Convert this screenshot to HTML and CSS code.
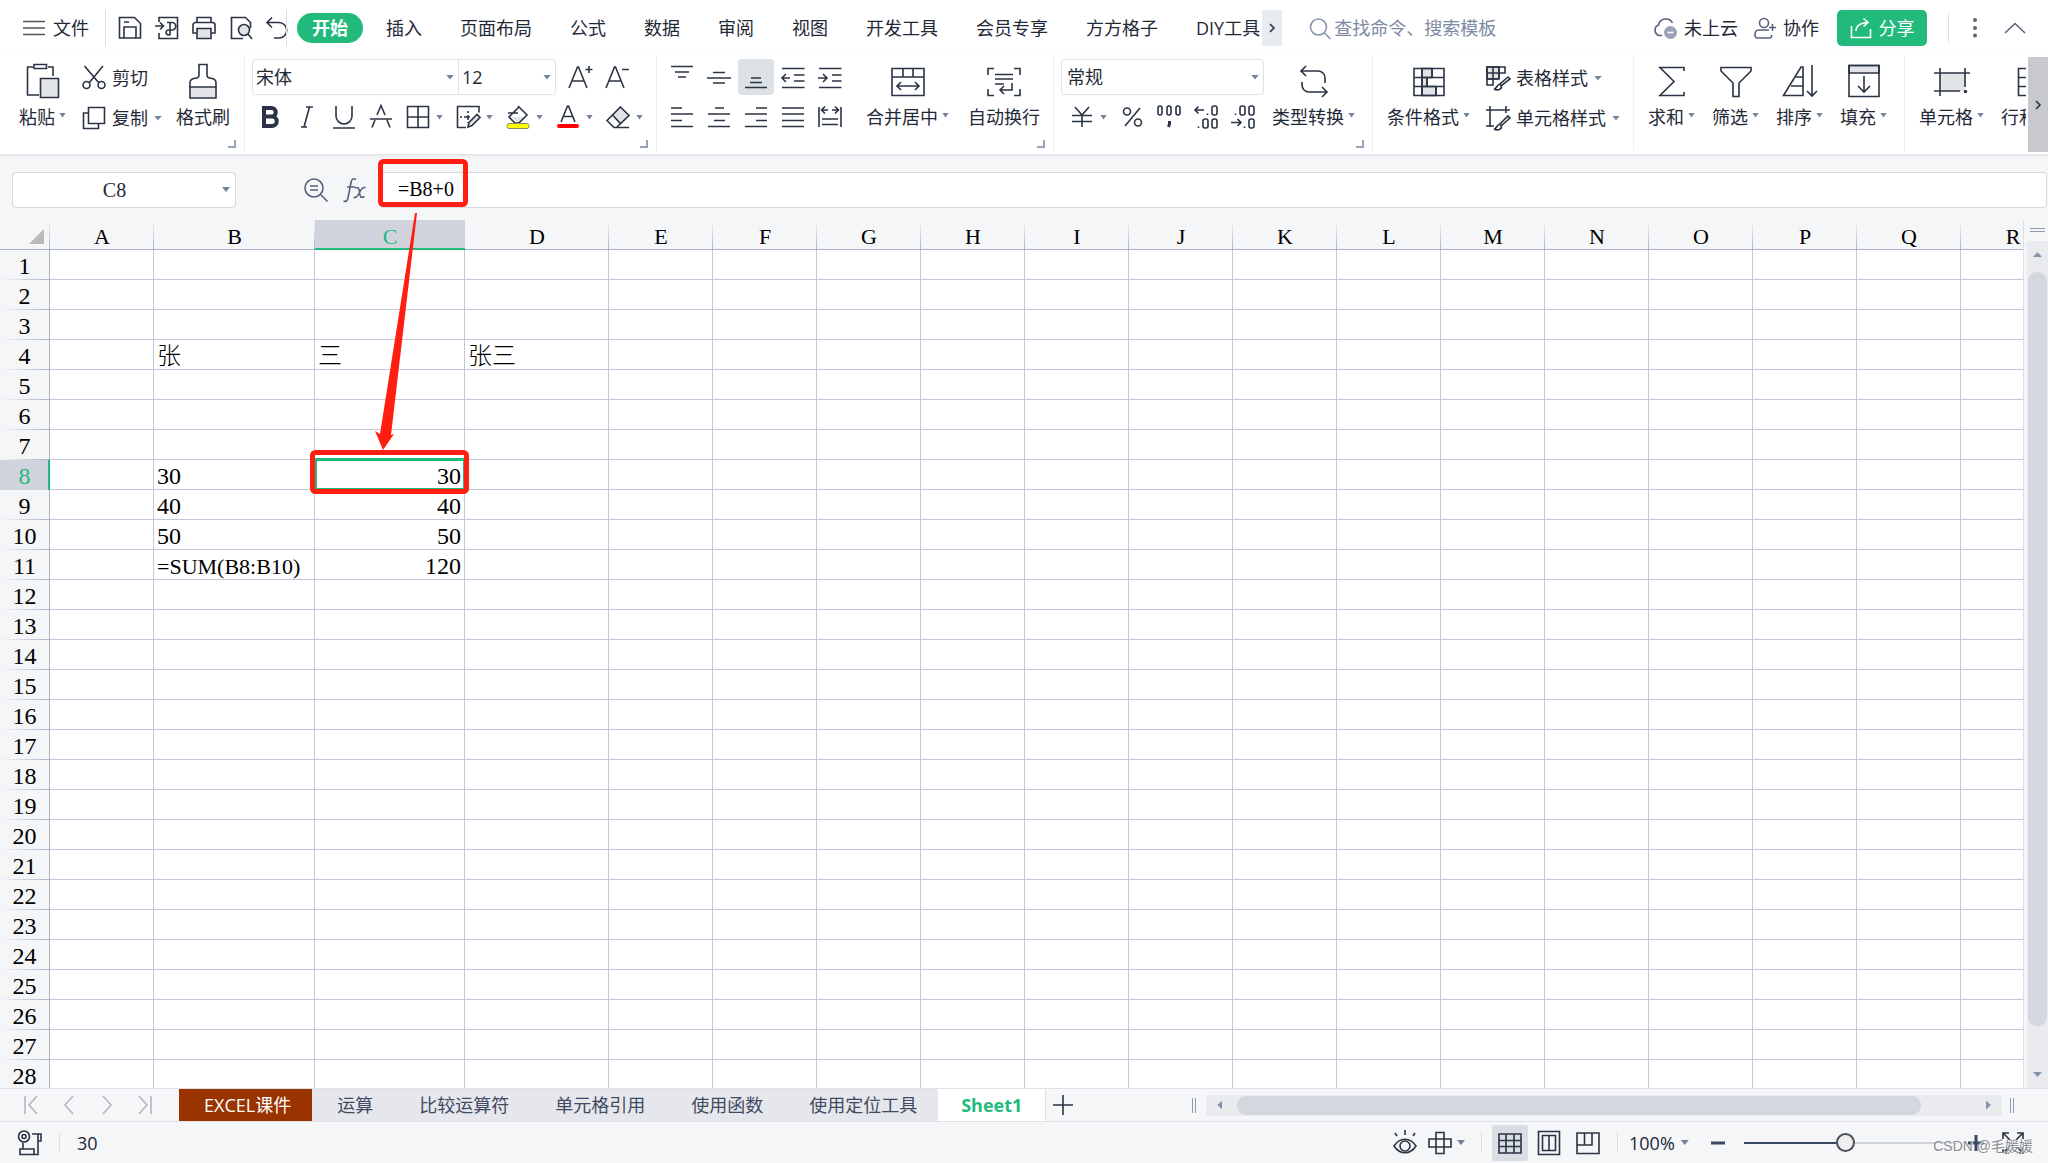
FILE: index.html
```html
<!DOCTYPE html>
<html lang="zh-CN">
<head>
<meta charset="utf-8">
<title>Sheet1</title>
<link rel="stylesheet" href="styles.css">
</head>
<body>
<header class="menubar">
  <button class="file"><svg class="ic" width="22" height="16"><path d="M0 1.500h22M0 8h22M0 14.500h22"/></svg>文件</button>
  <span class="sep tall"></span>
  <div class="quick">
    <button aria-label="保存"><svg class="ic" width="24" height="24"><path d="M1.500 1.500h15l6 6v14.500h-21zM6 22v-11h12v11M6 6h5"/></svg></button>
    <button aria-label="输出为PDF"><svg class="ic" width="24" height="24"><path d="M4 6v-4.500h18.500v21H4V17M0 10h8M5 6.500l3.500 3.500-3.500 3.500M12 6.500h5a3 3 0 0 1 0 7.500h-3a2.500 2.500 0 1 0 1 4.500V7"/></svg></button>
    <button aria-label="打印"><svg class="ic" width="24" height="24"><path d="M5 6V1.500h14V6M5 17H1V9a2.500 2.500 0 0 1 2.500-2.500h17A2.500 2.500 0 0 1 23 9v8h-4"/><path class="tint" d="M5 12.500h14v10H5z"/></svg></button>
    <button aria-label="打印预览"><svg class="ic" width="24" height="24"><path d="M14 22.500H2.500v-21h14l5 5V12"/><circle class="tint" cx="15" cy="14" r="5.500"/><path d="M19 18l4 5"/></svg></button>
    <button aria-label="撤消"><svg class="ic" width="24" height="24"><path d="M6 1.500L1 6.500l5 5M1.500 6.500H13a7.500 7.500 0 0 1 0 15.500H8"/></svg></button>
  </div>
  <span class="sep tall undo-sep"></span>
  <nav class="tabs">
    <button class="on">开始</button><button>插入</button><button>页面布局</button><button>公式</button><button>数据</button><button>审阅</button><button>视图</button><button>开发工具</button><button>会员专享</button><button>方方格子</button><button class="last">DIY工具</button>
  </nav>
  <button class="more" aria-label="更多"><svg class="ic" width="8" height="10"><path d="M2 1l4 4-4 4"/></svg></button>
  <label class="search"><svg class="ic" width="23" height="23"><circle cx="9.500" cy="10" r="8"/><path d="M15.500 16l6 6"/></svg><input type="text" placeholder="查找命令、搜索模板" aria-label="查找命令"></label>
  <div class="account">
    <button class="cloud"><svg class="ic soft" width="25" height="24"><path d="M9 19.500H6.500a5.500 5.500 0 0 1-1-10.500 7.500 7.500 0 0 1 14-2"/><circle cx="17.500" cy="16.500" r="6.500" class="dot"/><path d="M14.500 16.500h6" class="wh"/></svg>未上云</button>
    <button class="coop"><svg class="ic soft" width="23" height="24"><circle cx="10" cy="7" r="4.500"/><path d="M15 14H5a4 4 0 0 0-4 4v1.500A2.500 2.500 0 0 0 3.500 22h12a2 2 0 0 0 2-2v-1M18.500 8v7M15 11.500h7"/></svg>协作</button>
    <button class="share"><svg class="ic" width="22" height="22"><path d="M1.500 9v11.500h19V12M6 14c0-5 4-8 11.500-8.500M13.500 1.500l4.500 4-4.500 4"/></svg>分享</button>
    <span class="sep"></span>
    <button class="dots" aria-label="选项"><svg width="4" height="20"><g fill="#5b6577"><circle cx="2" cy="2" r="2"/><circle cx="2" cy="10" r="2"/><circle cx="2" cy="17.500" r="2"/></g></svg></button>
    <button aria-label="收起功能区"><svg class="ic gray" width="22" height="12"><path d="M1 11L11 1.500 21 11"/></svg></button>
  </div>
</header>

<section class="ribbon" aria-label="开始">
  <div class="groups">
    <div class="group g-clip">
      <button class="big"><svg class="ic" width="36" height="36"><path d="M8 4H2.500v28H14M23 4h5v9"/><path d="M9 1.500h12.500v4H9z"/><path class="tint" d="M15.500 15.500h18v19h-18z"/></svg><span>粘贴<i class="caret"></i></span></button>
      <div class="stack">
        <button><svg class="ic" width="24" height="24"><path d="M2.500 0l14.500 17M21 0L7 17"/><circle cx="4.500" cy="19" r="3.500"/><circle cx="19.500" cy="19" r="3.500"/></svg>剪切</button>
        <button><svg class="ic" width="24" height="24"><path d="M6.500 1.500h16v16h-16zM6 7H1.500v15.500h15V18"/></svg>复制<i class="caret"></i></button>
      </div>
      <button class="big"><svg class="ic" width="36" height="36"><path class="tint" d="M5 24h26v11H5z"/><path d="M5 24v-4c0-3 1-4 4-4.500 4-.500 5-1 5-4V1.500h8v10c0 3 1 3.500 5 4 3 .500 4 1.500 4 4.500v4"/></svg><span>格式刷</span></button>
      <i class="launcher"></i>
    </div>
    <div class="group g-font">
      <div class="rows">
        <div class="row">
          <div class="combo pair">
            <span class="sel fam"><select aria-label="字体"><option>宋体</option></select><i class="caret"></i></span>
            <span class="sel size"><select aria-label="字号"><option>12</option></select><i class="caret"></i></span>
          </div>
          <button class="tool inc" aria-label="增大字号"><svg class="ic" width="24" height="24"><path d="M1 23L9.500 2h1L19 23M4 16h12M17.500 4.500h7M21 1v7"/></svg></button>
          <button class="tool" aria-label="减小字号"><svg class="ic" width="24" height="24"><path d="M1 23L9.500 2h1L19 23M4 16h12M17 4.500h7"/></svg></button>
        </div>
        <div class="row">
          <button class="tool" aria-label="加粗"><svg class="ic bold" width="24" height="24"><path d="M6 3h7.500a4.200 4.200 0 0 1 0 8.500H6zM6 11.500h8a4.700 4.700 0 0 1 0 9.500H6z"/></svg></button>
          <button class="tool" aria-label="倾斜"><svg class="ic" width="24" height="24"><path d="M11 2h7M6 22h6M14.500 2L9 22"/></svg></button>
          <button class="tool" aria-label="下划线"><svg class="ic" width="24" height="24"><path d="M4 1v10a8 8 0 0 0 16 0V1M1 23h22"/></svg></button>
          <button class="tool" aria-label="删除线"><svg class="ic" width="24" height="24"><path d="M8 10l4-9.500L16 10M1 14h22M6 15l-3 7.500M18 15l3 7.500"/></svg></button>
          <button class="tool" aria-label="边框"><svg class="ic" width="24" height="24"><path d="M1.500 1.500h21v21h-21zM12 1.500v21M1.500 12h21"/></svg><i class="caret"></i></button>
          <button class="tool" aria-label="绘图边框"><svg class="ic" width="24" height="24"><path d="M1.500 23V1.500H23v6M1 22.500h9M12 6v2m0 2v5m0 2v1M4 12h2m2 0h6"/><path class="tint" d="M12 22l1-4.500L21 9.500l3 3-8 8z"/></svg><i class="caret"></i></button>
          <button class="tool" aria-label="填充颜色"><svg class="ic" width="24" height="24"><path class="tint" d="M5 12h15l-7 6z" stroke="none"/><path d="M12 1l9 9-8 8H9l-6-6 10-10M2 8h10"/><rect x="1" y="18.500" width="22" height="5" rx="2" fill="#ff0" stroke="#8a8f60" stroke-width="1"/></svg><i class="caret"></i></button>
          <button class="tool" aria-label="字体颜色"><svg class="ic" width="24" height="24"><path d="M5 17L11.500 1h1L19 17M7.500 11.500h9"/><rect x="1" y="19" width="22" height="4" rx="2" fill="#f00" stroke="none"/></svg><i class="caret"></i></button>
          <button class="tool" aria-label="清除"><svg class="ic" width="24" height="24"><path class="tint" d="M14.500 2l8.500 8.500-8.500 8L6.500 10z"/><path d="M6.500 10L1 15.500l7 7h15M14.500 18.500l-4 4"/></svg><i class="caret"></i></button>
        </div>
      </div>
      <i class="launcher"></i>
    </div>
    <div class="group g-align">
      <div class="rows">
        <div class="row">
          <button class="tool" aria-label="顶端对齐"><svg class="ic" width="24" height="24"><path d="M1 1.500h22M5 7h14M8 12h8"/></svg></button>
          <button class="tool" aria-label="垂直居中"><svg class="ic" width="24" height="24"><path d="M6 7.500h12M0 13h24M6 18h12"/></svg></button>
          <button class="tool on" aria-label="底端对齐"><svg class="ic" width="24" height="24"><path d="M7 13h10M6 17.500h12M1 22.500h22"/></svg></button>
          <button class="tool" aria-label="减少缩进量"><svg class="ic" width="24" height="24"><path d="M1 3.500h22.500M13 10h10.500M13 16h10.500M1 22.500h22.500M1 13h8M5 9l-4 4 4 4"/></svg></button>
          <button class="tool" aria-label="增加缩进量"><svg class="ic" width="24" height="24"><path d="M1 3.500h22.500M14 10h9.500M14 16h9.500M1 22.500h22.500M0 13h8M5 9l4 4-4 4"/></svg></button>
        </div>
        <div class="row">
          <button class="tool" aria-label="左对齐"><svg class="ic" width="24" height="24"><path d="M1 3h11M1 9h22M1 15.500h11M1 21.500h22"/></svg></button>
          <button class="tool" aria-label="水平居中"><svg class="ic" width="24" height="24"><path d="M8 3h9M1 9h22M7 15.500h11M1 21.500h22"/></svg></button>
          <button class="tool" aria-label="右对齐"><svg class="ic" width="24" height="24"><path d="M12 3h11M1 9h22M12 15.500h11M1 21.500h22"/></svg></button>
          <button class="tool" aria-label="两端对齐"><svg class="ic" width="24" height="24"><path d="M1 3h22M1 9h22M1 15.500h22M1 21.500h22"/></svg></button>
          <button class="tool" aria-label="分散对齐"><svg class="ic" width="24" height="24"><path d="M1 2v20M23 2v20M4 14h16M4 19.500h16M4 5h6M14 5h6M7 1.500L3.500 5 7 8.500M17 1.500L20.500 5 17 8.500"/></svg></button>
        </div>
      </div>
      <button class="big merge"><svg class="ic" width="36" height="36"><path d="M2 5.500h32v27H2zM2 14h32M13 5.500V14M23 5.500V14M7 23h22M11 19l-4 4 4 4M25 19l4 4-4 4"/></svg><span>合并居中<i class="caret"></i></span></button>
      <button class="big"><svg class="ic" width="36" height="36"><path d="M2 12V5.500h6M28 5.500h6V12M2 26v6.500h6M28 32.500h6V26M9 11.500h18M9 16h18M9 21h9M26 20v7H14M18 23l-4 4 4 4"/></svg><span>自动换行</span></button>
      <i class="launcher"></i>
    </div>
    <div class="group g-num">
      <div class="rows">
        <div class="row"><span class="combo sel numfmt"><select aria-label="数字格式"><option>常规</option></select><i class="caret"></i></span></div>
        <div class="row codes">
          <button class="tool" aria-label="货币"><svg class="ic" width="24" height="24"><path d="M5 2l7 8 7-8M2 10.500h20M2 16.500h20M12 10v12"/></svg><i class="caret"></i></button>
          <button class="tool" aria-label="百分比"><svg class="ic" width="24" height="24"><circle cx="7" cy="6.500" r="3.500"/><circle cx="18" cy="17.500" r="3.500"/><path d="M20 3L5 21"/></svg></button>
          <button class="tool" aria-label="千位分隔"><svg class="ic" width="24" height="24"><rect x="1" y="1" width="4" height="9" rx="2"/><rect x="10" y="1" width="4" height="9" rx="2"/><rect x="19" y="1" width="4" height="9" rx="2"/><path d="M12.500 16v3l-1 3" stroke-width="3"/></svg></button>
          <button class="tool" aria-label="增加小数位"><svg class="ic" width="24" height="24"><path d="M1 5h9M4.500 1.500L1 5l3.500 3.500M13.500 8.500v1.500M4.500 21.500V23"/><rect x="18" y="1" width="5" height="9" rx="2"/><rect x="9" y="14" width="5" height="9" rx="2"/><rect x="18" y="14" width="5" height="9" rx="2"/></svg></button>
          <button class="tool" aria-label="减少小数位"><svg class="ic" width="24" height="24"><path d="M0 17.500h10M6.500 14l3.500 3.500L6.500 21M13.500 21.500V23M4.500 8.500v1.500"/><rect x="9" y="1" width="5" height="9" rx="2"/><rect x="18" y="1" width="5" height="9" rx="2"/><rect x="18" y="14" width="5" height="9" rx="2"/></svg></button>
        </div>
      </div>
      <button class="big conv"><svg class="ic" width="36" height="36"><path d="M10 3L5 8l5 5M5 8h17a7 7 0 0 1 7 7v5M6 19v3a7 7 0 0 0 7 7h18M26 24l5 5-5 5"/></svg><span>类型转换<i class="caret"></i></span></button>
      <i class="launcher"></i>
    </div>
    <div class="group g-style">
      <button class="big"><svg class="ic" width="36" height="36"><path class="tint" d="M11 5.500h10v9H11zM11 14.500h5v9h-5zM11 23.500h14v9H11z"/><path d="M3 5.500h30v27H3zM3 14.500h30M3 23.500h30M11 5.500v27M21 5.500v9M16 14.500v9M25 23.500v9"/></svg><span>条件格式<i class="caret"></i></span></button>
      <div class="stack">
        <button><svg class="ic" width="24" height="24"><path class="tint" d="M1 1h12v12H1z"/><path d="M1 1h18v6H1zM1 7h11M1 13h11M1 1v18h6V1M13 1v12"/><path d="M22 11l2 2-9 7-1-2zM14 18c-3 0-3 5-6 5 4 2 9 0 7-4"/></svg>表格样式<i class="caret"></i></button>
        <button><svg class="ic" width="24" height="24"><path d="M4 0v21M0 4h24M20 0v7M0 20h8"/><path d="M22 10l2 2-9 8-1-2zM14 18c-3 0-3 5-6 5 4 2 9 0 7-4"/></svg>单元格样式<i class="caret"></i></button>
      </div>
    </div>
    <div class="group g-edit">
      <button class="big"><svg class="ic" width="36" height="36"><path d="M30 8V4.500H6l14 14L6 32.500h24V29"/></svg><span>求和<i class="caret"></i></span></button>
      <button class="big"><svg class="ic" width="36" height="36"><path d="M3 4.500h30V8L21 20v13.500h-6V20L3 8z"/></svg><span>筛选<i class="caret"></i></span></button>
      <button class="big"><svg class="ic" width="36" height="36"><path d="M21 4v28.500H1.500L19 4zM14 14h7M9 23h12M30 2v31M25 28l5 5 5-5"/></svg><span>排序<i class="caret"></i></span></button>
      <button class="big"><svg class="ic" width="36" height="36"><path class="tint" d="M3 2.500h30V10H3z"/><path d="M3 2.500h30v31H3zM18 13v15M12 23l6 6 6-6"/></svg><span>填充<i class="caret"></i></span></button>
    </div>
    <div class="group g-cell">
      <button class="big"><svg class="ic" width="36" height="36"><path class="tint" d="M6 10h25v18H6z" stroke="none"/><path d="M6 5v28M0 10h36M31 5v19M0 28h26"/><circle cx="31.500" cy="28.500" r="1"/></svg><span>单元格<i class="caret"></i></span></button>
      <button class="big"><svg class="ic" width="36" height="36"><path d="M2.500 5.500h31v27h-31zM2.500 14.500h12M2.500 23.500h12M14.500 5.500v27"/></svg><span>行和列<i class="caret"></i></span></button>
    </div>
  </div>
  <button class="ribbon-next" aria-label="下一组"><svg class="ic" width="8" height="10"><path d="M2 1l4 4-4 4"/></svg></button>
</section>

<section class="formula">
  <span class="namebox"><input type="text" value="C8" aria-label="名称框"><i class="caret"></i></span>
  <button class="lens" aria-label="查看公式"><svg class="ic soft" width="24" height="24"><circle cx="10" cy="10" r="9"/><path d="M6 8h8M6 12h8M17 17l6.500 6.500"/></svg></button>
  <button class="fx" aria-label="插入函数"><svg class="ic soft" width="24" height="26"><path d="M13 2.500c-2.500-1.500-4.500-.500-5 3L5 21c-.500 3-2 4-4.500 3M4 10h8M12 11c3-1.500 4 0 4.500 4 .500 5 1 6.500 5 4.500M22.500 10.500c-3-.500-5 2.500-6 5-1.500 3.500-3.500 5.500-6 5"/></svg></button>
  <input class="fbar" type="text" value="=B8+0" aria-label="编辑栏">
</section>

<main class="sheet">
  <div class="view"><table class="grid" id="grid"></table></div>
  <div class="vscroll"><i class="split"></i><div class="vtrack"><i class="up"></i><i class="vthumb"></i><i class="down"></i></div></div>
</main>

<section class="sheetbar">
  <div class="navs">
    <button aria-label="第一张"><svg class="ic" width="14" height="20"><path d="M1 1v18M13 1L5 10l8 9"/></svg></button>
    <button aria-label="上一张"><svg class="ic" width="14" height="20"><path d="M11 1L3 10l8 9"/></svg></button>
    <button aria-label="下一张"><svg class="ic" width="14" height="20"><path d="M3 1l8 9-8 9"/></svg></button>
    <button aria-label="最后一张"><svg class="ic" width="14" height="20"><path d="M13 1v18M1 1l8 9-8 9"/></svg></button>
  </div>
  <div class="sheets">
    <button class="brown">EXCEL课件</button><button>运算</button><button>比较运算符</button><button>单元格引用</button><button>使用函数</button><button>使用定位工具</button><button class="on">Sheet1</button>
  </div>
  <button class="add" aria-label="新建工作表"><svg class="ic" width="20" height="20"><path d="M10 0v20M0 10h20"/></svg></button>
  <i class="grip"></i>
  <div class="hscroll"><i class="left"></i><i class="hthumb"></i><i class="right"></i></div>
  <i class="grip end"></i>
</section>

<footer class="status">
  <svg class="ic rec" width="26" height="26"><circle cx="7" cy="6.500" r="5.500"/><circle cx="7" cy="6.500" r="2"/><path d="M15 4h9v7h-3M21 4v20.500H3V19h14v5.500M6 13v6"/></svg>
  <span class="sep"></span>
  <span class="value">30</span>
  <div class="tools">
    <button class="eye" aria-label="护眼模式"><svg class="ic" width="24" height="26"><path d="M1 16c6-9 16-9 22 0-6 9-16 9-22 0zM12 0v5M2 3l2 3M22 3l-2 3"/><circle cx="12" cy="16" r="5"/></svg></button>
    <button class="read" aria-label="阅读模式"><svg class="ic" width="24" height="24"><path d="M8 1.500h8v21H8zM1 8h22v8H1z"/></svg><i class="caret"></i></button>
    <span class="sep"></span>
    <div class="views">
      <button class="on" aria-label="普通视图"><svg class="ic" width="24" height="24"><path d="M1 3h22v19H1zM1 9.500h22M1 15.500h22M8 3v19M16 3v19"/></svg></button>
      <button aria-label="页面布局"><svg class="ic" width="24" height="26"><path d="M1.500 1.500h21v23h-21zM5.500 5.500h13v15h-13zM12 5.500v15"/></svg></button>
      <button aria-label="分页预览"><svg class="ic" width="24" height="24"><path d="M1 2h22v20.500H1zM1 14h15V2M8.500 2v12"/></svg></button>
    </div>
    <span class="sep"></span>
    <button class="pct">100%<i class="caret"></i></button>
    <button aria-label="缩小"><svg class="ic heavy" width="16" height="16"><path d="M1 8h14"/></svg></button>
    <input class="zoom" type="range" min="0" max="100" value="47" aria-label="显示比例">
    <button aria-label="放大"><svg class="ic heavy" width="16" height="16"><path d="M0 8h16M8 0v16"/></svg></button>
    <button class="full" aria-label="全屏"><svg class="ic" width="24" height="24"><path d="M9 9L2 2M2 8V2h6M15 9l7-7M16 2h6v6M9 15l-7 7M2 16v6h6M15 15l7 7M22 16v6h-6"/></svg></button>
    <span class="mark">CSDN @毛媛媛</span>
  </div>
</footer>

<svg class="notes" width="480" height="500" aria-hidden="true">
  <rect x="380.500" y="161.500" width="85" height="43" rx="3"/>
  <rect x="312.500" y="452.500" width="154" height="39" rx="3"/>
  <path d="M415 213h2L391 435l3-1-11 16-8-19 5 3z"/>
</svg>
<script src="grid.js"></script>
</body>
</html>
```
FILE: styles.css
```css
* { box-sizing: border-box; }
body {
  margin: 0;
  height: 100vh;
  display: flex;
  flex-direction: column;
  position: relative;
  overflow: hidden;
  background: #fff;
  color: #1f2937;
  font: 400 18px/24px "Open Sans", "Noto Sans CJK SC", sans-serif;
}
button, input, select {
  font: inherit;
  color: inherit;
  background: none;
  border: 0;
  padding: 0;
  margin: 0;
}
button { display: flex; align-items: center; white-space: nowrap; flex: none; }
input { min-width: 0; outline: 0; }
svg { display: block; flex: none; overflow: visible; }
.ic { fill: none; stroke: #2b3444; stroke-width: 1.6; }
.ic .tint { fill: #e2e4e7; }
.ic.soft { stroke: #56627a; }
.ic.gray { stroke: #5b6577; }
.ic.heavy { stroke: #3a4760; stroke-width: 3; }
.ic.bold { stroke-width: 4; }
.caret { width: 8px; height: 5px; background: #74839c; clip-path: polygon(0 0, 100% 0, 50% 100%); flex: none; }
.sep { width: 1px; height: 30px; background: #dcdee2; flex: none; }

/* menu bar */
.menubar { display: flex; align-items: center; height: 56px; padding-left: 23px; flex: none; }
.file { gap: 8px; }
.file .ic { stroke: #555; }
.sep.tall { height: 36px; margin-left: 16px; }
.quick { display: flex; gap: 13px; padding-left: 12px; }
.sep.undo-sep { margin-left: -4px; }
.tabs { display: flex; gap: 8px; padding-left: 10px; overflow: hidden; }
.tabs button { height: 30px; padding: 0 15px; border-radius: 15px; }
.tabs .on { background: #21ba7c; color: #fff; font-weight: 700; }
.tabs .last { padding-right: 0; }
.more { width: 20px; height: 36px; background: #e8ebef; justify-content: center; margin-left: 2px; }
.search { display: flex; align-items: center; gap: 2px; margin-left: 27px; flex: 0 1 200px; }
.search .ic { stroke: #8a97ae; }
.search input { flex: 1; }
.search input::placeholder { color: #7c89a3; opacity: 1; }
.account { display: flex; align-items: center; margin-left: auto; padding-right: 22px; }
.account button { gap: 6px; }
.account .dot { fill: #9aa3b5; stroke: none; }
.account .wh { stroke: #fff; }
.account .coop { margin-left: 16px; }
.account .share { width: 90px; height: 36px; margin: 0 21px 0 18px; gap: 7px; justify-content: center; border-radius: 5px; background: #21ba7c; color: #fff; }
.share .ic { stroke: #fff; }
.account .dots { margin: 0 27px 0 24px; }

/* ribbon */
.ribbon { display: flex; height: 99px; border-bottom: 1px solid #e2e4e7; box-shadow: 0 1px 3px #e4e6ea; flex: none; z-index: 1; }
.groups { display: flex; flex: 1; overflow: hidden; margin-right: 2px; }
.group { display: flex; position: relative; flex: none; height: 95px; border-right: 1px solid #eceef1; }
.big { flex-direction: column; padding-top: 7px; gap: 6px; justify-content: flex-start; }
.big span { display: flex; align-items: center; gap: 4px; }
.big .caret { width: 7px; margin-top: -4px; }
.stack { display: flex; flex-direction: column; gap: 4px; padding-top: 4px; }
.stack button { height: 36px; gap: 6px; }
.rows { display: flex; flex-direction: column; gap: 4px; padding-top: 3px; }
.row { display: flex; gap: 1px; }
.tool { height: 36px; padding: 0 6px; gap: 6px; }
.tool .caret { width: 7px; }
.tool.on { background: #dce1e6; border-radius: 4px; }
.tool.inc { margin-left: 5px; }
.combo { height: 36px; border: 1px solid #dfe1e5; border-radius: 4px; }
.pair { display: flex; width: 304px; }
.sel { position: relative; display: flex; align-items: center; }
.sel select { appearance: none; width: 100%; height: 34px; padding-left: 3px; }
.sel .caret { position: absolute; right: 4px; }
.fam { width: 206px; border-right: 1px solid #dfe1e5; }
.size { flex: 1; }
.numfmt { width: 203px; }
.numfmt select { padding-left: 5px; }
.codes { padding-left: 3px; }
.launcher { position: absolute; right: 8px; bottom: 3px; width: 8px; height: 8px; border: solid #97a3b8; border-width: 0 2px 2px 0; }
.g-clip { padding: 0 14px 0 19px; }
.g-clip .stack { margin: 0 14px 0 16px; }
.g-font { padding: 0 7px; }
.g-align { padding: 0 13px 0 7px; }
.merge { margin: 0 19px 0 18px; }
.g-num { padding: 0 17px 0 7px; }
.conv { margin-left: 8px; }
.g-style { padding: 0 13px 0 14px; gap: 16px; }
.g-edit, .g-cell { padding: 0 17px 0 14px; gap: 17px; }
.ribbon-next { width: 20px; height: 95px; margin-top: 1px; background: #c8c9ce; justify-content: center; }

/* formula bar */
.formula { display: flex; align-items: center; height: 65px; padding: 4px 1px 0 12px; background: #f5f6f8; flex: none; }
.formula input { font: 20px/24px "Liberation Serif", "Noto Sans CJK SC", serif; }
.namebox { display: flex; align-items: center; width: 224px; height: 36px; padding-right: 5px; background: #fff; border: 1px solid #d6d8dd; border-radius: 4px; }
.namebox input { flex: 1; text-align: center; padding-right: 6px; }
.lens { margin-left: 68px; }
.fx { margin: 0 12px 0 15px; }
.formula .fbar { flex: 1; height: 36px; padding-left: 18px; background: #fff; border: 1px solid #d6d8dd; border-radius: 4px; color: #000; }

/* sheet */
.sheet { display: flex; flex: 1; min-height: 0; background: #f5f6f8; }
.view { flex: 1; overflow: hidden; background: #fff; border-right: 1px solid #dcdfe6; min-width: 0; }
.grid { table-layout: fixed; width: 0; border-collapse: separate; border-spacing: 0; font: 24px/25px "Liberation Serif", "Noto Sans CJK SC", serif; color: #000; }
.grid th, .grid td { height: 30px; padding: 4px 0 0; overflow: hidden; white-space: nowrap; font-weight: 400; vertical-align: top; }
.grid td { border: solid #c3c8da; border-width: 0 1px 1px 0; padding: 4px 3px 0; font-weight: 300; }
.grid td.num { text-align: right; }
.grid td.code { font-size: 22px; }
.grid thead th { font-size: 22px; border-bottom: 1px solid #a9b3c8; background: linear-gradient(#f5f6f8, #a9b3c8) right / 1px 100% no-repeat #f5f6f8; }
.grid thead th.on { background: #d1d4dc; color: #21ba7c; border-bottom-color: #21ba7c; box-shadow: inset 0 -1px #21ba7c; }
.grid tbody th { border-right: 1px solid #a9b3c8; background: linear-gradient(90deg, #f5f6f8, #a9b3c8) bottom / 100% 1px no-repeat #f5f6f8; }
.grid tbody th.on { background: #d1d4dc; color: #21ba7c; border-right-color: #21ba7c; box-shadow: inset -1px 0 #21ba7c; }
.grid .corner { position: relative; }
.corner::after { content: ""; position: absolute; right: 6px; bottom: 5px; width: 15px; height: 15px; background: #b9babc; clip-path: polygon(100% 0, 100% 100%, 0 100%); }
.grid td.cur { position: relative; overflow: visible; }
.cur::after { content: ""; position: absolute; inset: -2px -1px -1px 0; border: 2px solid #21ba7c; border-top-width: 3px; }
.vscroll { width: 24px; padding-left: 3px; display: flex; flex-direction: column; }
.split { height: 4px; margin: 8px 3px 9px; border: solid #8f9bb3; border-width: 1px 0; }
.vtrack { flex: 1; display: flex; flex-direction: column; align-items: center; background: #e9ebef; padding: 11px 0; }
.up, .down { width: 9px; height: 5px; background: #8493ae; clip-path: polygon(50% 0, 100% 100%, 0 100%); }
.down { clip-path: polygon(0 0, 100% 0, 50% 100%); }
.vthumb { flex: 1; width: 19px; margin: 15px 0 46px; border-radius: 9px; background: #d4d7de; }

/* sheet tabs */
.sheetbar { display: flex; height: 34px; align-items: center; border: solid #dfe1e7; border-width: 1px 0; background: #f5f6f8; flex: none; }
.navs { display: flex; gap: 24px; width: 179px; padding-left: 24px; flex: none; }
.navs .ic { stroke: #b4b7bd; }
.sheets { display: flex; align-self: stretch; }
.sheets button { padding: 0 21px 0 25px; background: #e6e7ec; color: #3f4b63; }
.sheets .brown { background: #993300; color: #fff; }
.sheets .on { padding: 0 23px; background: #fff; color: #21ba7c; font-weight: 700; border-right: 1px solid #dfe1e7; }
.add { margin-left: 7px; }
.grip { width: 4px; height: 15px; margin: 0 10px 0 119px; border: solid #8f9bb3; border-width: 0 1px; flex: none; }
.grip.end { margin: 0 34px 0 8px; }
.hscroll { flex: 1; display: flex; align-items: center; height: 21px; padding: 0 11px; background: #e9ebef; }
.left, .right { width: 5px; height: 9px; background: #8493ae; clip-path: polygon(100% 0, 100% 100%, 0 50%); }
.right { clip-path: polygon(0 0, 100% 50%, 0 100%); }
.hthumb { flex: 1; height: 19px; margin: 0 65px 0 15px; border-radius: 9px; background: #d4d7de; }

/* status bar */
.status { display: flex; align-items: center; height: 41px; padding-left: 17px; background: #f5f6f8; flex: none; }
.status .sep { height: 21px; }
.rec { margin-right: 16px; }
.value { margin-left: 17px; }
.tools { position: relative; display: flex; align-items: center; margin-left: auto; padding-right: 23px; }
.read { gap: 5px; margin: 0 16px 0 11px; }
.views { display: flex; gap: 3px; margin: 0 11px 0 10px; }
.views button { width: 36px; height: 36px; justify-content: center; border-radius: 3px; }
.views .on { background: #d9dde4; }
.pct { width: 64px; gap: 6px; margin: 0 17px 0 11px; }
.zoom { appearance: none; width: 214px; height: 20px; margin: 0 10px 0 18px; background: linear-gradient(90deg, #3a4760 101px, #cfd3dc 101px) center / 100% 2px no-repeat; }
.zoom::-webkit-slider-thumb { appearance: none; width: 19px; height: 19px; border-radius: 50%; border: 2px solid #4a4f58; background: #eee; }
.full { margin-left: 17px; }
.mark { position: absolute; right: 15px; top: 11px; font: 14px/20px "Liberation Sans", "Noto Sans CJK SC", sans-serif; color: #8b8d91; text-shadow: 1px 1px 0 #fff; white-space: nowrap; }

/* red callouts over the sheet */
.notes { position: absolute; left: 0; top: 0; z-index: 2; pointer-events: none; }
.notes rect { fill: none; stroke: #ff1e10; stroke-width: 5; }
.notes path { fill: #ff1e10; }
```
FILE: grid.js
```js
const columns = [["A", 104], ["B", 161], ["C", 150], ["D", 144]];
for (const name of "EFGHIJKLMNOPQR") columns.push([name, 104]);

const cells = {
  B4: ["张"], C4: ["三"], D4: ["张三"],
  B8: ["30"], C8: ["30", "num cur"],
  B9: ["40"], C9: ["40", "num"],
  B10: ["50"], C10: ["50", "num"],
  B11: ["=SUM(B8:B10)", "code"], C11: ["120", "num"],
};

let html = '<colgroup><col style="width:50px">';
html += columns.map(([, w]) => `<col style="width:${w}px">`).join("");
html += '</colgroup><thead><tr><th class="corner"></th>';
html += columns.map(([n]) => `<th${n === "C" ? ' class="on"' : ""}>${n}</th>`).join("");
html += "</tr></thead><tbody>";
for (let r = 1; r <= 28; r++) {
  html += `<tr><th${r === 8 ? ' class="on"' : ""}>${r}</th>`;
  for (const [n] of columns) {
    const [text, cls] = cells[n + r] || [""];
    html += `<td${cls ? ` class="${cls}"` : ""}>${text}</td>`;
  }
  html += "</tr>";
}
document.getElementById("grid").innerHTML = html + "</tbody>";
```
